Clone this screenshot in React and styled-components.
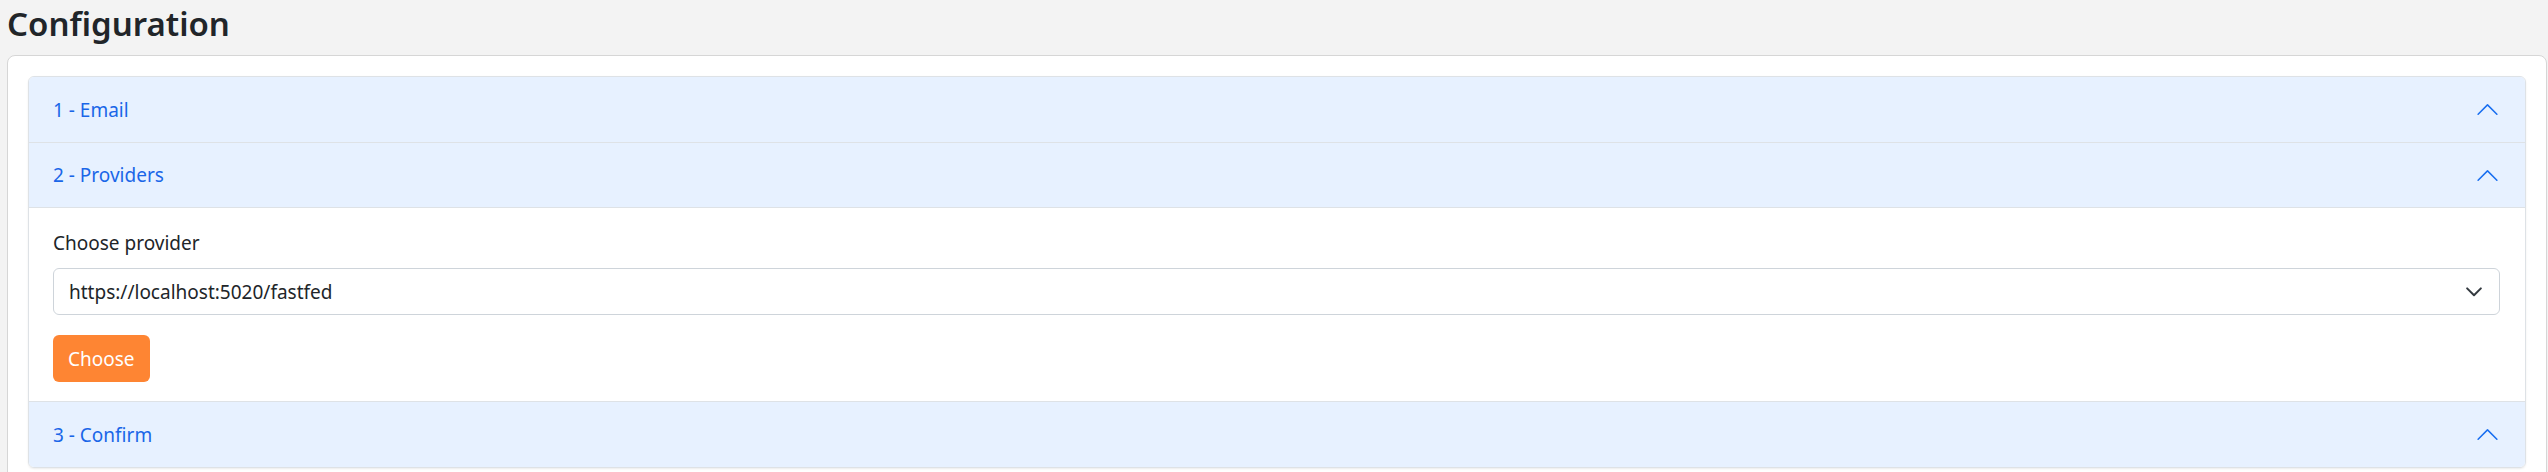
import styled, { createGlobalStyle } from "styled-components";

const GlobalStyle = createGlobalStyle`
  body {
    margin: 0;
    background-color: #f3f3f3;
    font-family: "Noto Sans", "Open Sans", sans-serif;
    color: #212529;
  }
`;

const Page = styled.div`
  padding: 0 1px 0 7px;
`;

const Title = styled.h2`
  margin: 0 0 7px;
  font-size: 33px;
  font-weight: 600;
  line-height: 48px;
  color: #212529;
`;

const Card = styled.div`
  background-color: #fff;
  border: 1px solid #d6d6d6;
  border-radius: 8px;
  padding: 20px;
`;

const Accordion = styled.div`
  border: 1px solid #dee2e6;
  border-radius: 6px;
  overflow: hidden;
  box-shadow: 0 1px 2px rgba(0, 0, 0, 0.08);
`;

const Item = styled.div`
  & + & {
    border-top: 1px solid #dee2e6;
  }
`;

const Header = styled.button`
  display: flex;
  align-items: center;
  justify-content: space-between;
  width: 100%;
  height: 65px;
  padding: 0 25px 0 24px;
  border: 0;
  border-bottom: ${(p) => (p.$open ? "1px solid #dee2e6" : "0")};
  background-color: #e7f1ff;
  color: #1a66e8;
  font-family: inherit;
  font-size: 19px;
  text-align: left;
  cursor: pointer;
`;

const Body = styled.div`
  padding: 20px 25px 19px 24px;
`;

const Label = styled.label`
  display: block;
  margin-bottom: 10px;
  font-size: 19px;
  line-height: 30px;
`;

const SelectBox = styled.div`
  display: flex;
  align-items: center;
  justify-content: space-between;
  height: 47px;
  box-sizing: border-box;
  padding: 0 15px;
  border: 1px solid #ced4da;
  border-radius: 6px;
  font-size: 19px;
  color: #212529;
`;

const Button = styled.button`
  margin-top: 20px;
  height: 47px;
  padding: 0 15px;
  border: 0;
  border-radius: 6px;
  background-color: #fe8533;
  color: #fff;
  font-family: inherit;
  font-size: 19px;
  cursor: pointer;
`;

function ChevronUp() {
  return (
    <svg width="25" height="25" viewBox="0 0 16 16" fill="#1a6ff0" style={{ transform: "rotate(180deg)" }}>
      <path d="M1.646 4.646a.5.5 0 0 1 .708 0L8 10.293l5.646-5.647a.5.5 0 0 1 .708.708l-6 6a.5.5 0 0 1-.708 0l-6-6a.5.5 0 0 1 0-.708z" />
    </svg>
  );
}

function Caret() {
  return (
    <svg width="20" height="15" viewBox="0 0 16 12">
      <path d="m2.5 3.5 5.5 5.5 5.5-5.5" fill="none" stroke="#343a40" strokeWidth="1.6" strokeLinecap="round" strokeLinejoin="round" />
    </svg>
  );
}

const steps = [
  { title: "1 - Email", open: false },
  { title: "2 - Providers", open: true },
  { title: "3 - Confirm", open: false },
];

export default function App() {
  return (
    <>
      <GlobalStyle />
      <Page>
        <Title>Configuration</Title>
        <Card>
          <Accordion>
            {steps.map((step) => (
              <Item key={step.title}>
                <Header $open={step.open}>
                  <span>{step.title}</span>
                  <ChevronUp />
                </Header>
                {step.open && (
                  <Body>
                    <Label>Choose provider</Label>
                    <SelectBox>
                      <span>https://localhost:5020/fastfed</span>
                      <Caret />
                    </SelectBox>
                    <Button>Choose</Button>
                  </Body>
                )}
              </Item>
            ))}
          </Accordion>
        </Card>
      </Page>
    </>
  );
}
